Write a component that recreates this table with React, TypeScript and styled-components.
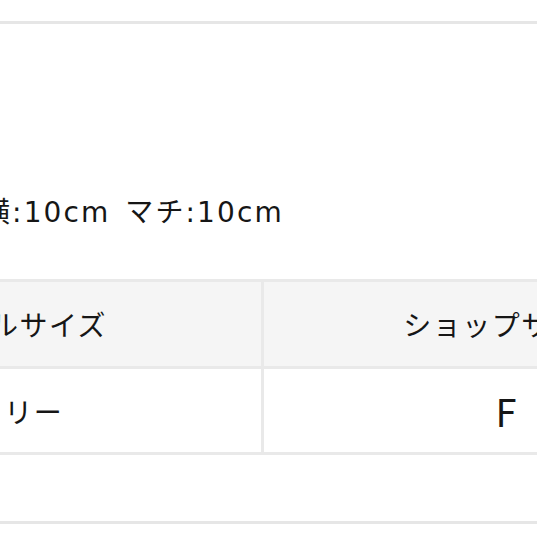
import styled, { createGlobalStyle } from "styled-components";

const GlobalStyle = createGlobalStyle`
  html, body {
    margin: 0;
    padding: 0;
    background: #ffffff;
    overflow: hidden;
  }
  body {
    font-family: "Noto Sans CJK JP", "Noto Sans", sans-serif;
    color: #161616;
  }
`;

const Page = styled.div`
  width: 977px;
  margin-left: -226px;
  padding-top: 21px;
`;

const Rule = styled.div<{ $gap: number }>`
  margin-top: ${(p) => p.$gap}px;
  border-top: 3px solid #e6e6e6;
`;

const Spec = styled.p`
  margin: 169px 0 0;
  padding-left: 208px;
  font-family: "DejaVu Sans", "Noto Sans CJK JP", sans-serif;
  font-size: 28px;
  line-height: 40px;
  letter-spacing: 2.1px;
  word-spacing: 4px;
  white-space: nowrap;
`;

const SizeTable = styled.table`
  width: 977px;
  margin-top: 46px;
  border-collapse: collapse;
  table-layout: fixed;
`;

const Cell = styled.td<{ $head?: boolean }>`
  height: ${(p) => (p.$head ? 84 : 83)}px;
  padding: 0;
  border: 3px solid #e9e9e9;
  background: ${(p) => (p.$head ? "#f5f5f5" : "#ffffff")};
  text-align: center;
  vertical-align: middle;
  font-size: 28px;
  letter-spacing: 1.5px;
  white-space: nowrap;
`;

const BigValue = styled.span`
  font-size: 38px;
  letter-spacing: 0;
`;

export default function App() {
  return (
    <>
      <GlobalStyle />
      <Page>
        <Rule $gap={0} />
        <Spec>横:10cm マチ:10cm</Spec>
        <SizeTable>
          <tbody>
            <tr>
              <Cell $head>モデルサイズ</Cell>
              <Cell $head>ショップサイズ</Cell>
            </tr>
            <tr>
              <Cell>フリー</Cell>
              <Cell>
                <BigValue>F</BigValue>
              </Cell>
            </tr>
          </tbody>
        </SizeTable>
        <Rule $gap={66} />
      </Page>
    </>
  );
}
